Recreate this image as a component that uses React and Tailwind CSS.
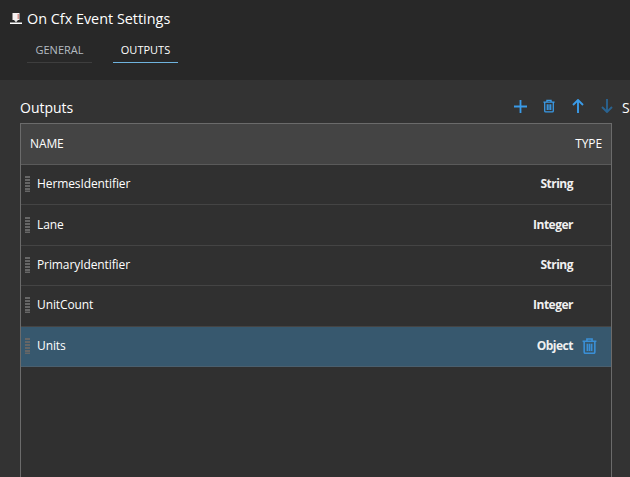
const rows = [
  { name: 'HermesIdentifier', type: 'String' },
  { name: 'Lane', type: 'Integer' },
  { name: 'PrimaryIdentifier', type: 'String' },
  { name: 'UnitCount', type: 'Integer' },
  { name: 'Units', type: 'Object', selected: true },
]

function TrashIcon({ className }) {
  return (
    <svg viewBox="0 0 14 15" fill="none" stroke="currentColor" strokeWidth="1.5" className={className}>
      <path d="M0.5 3h13M4.6 3V1h4.8v2M2 3v10.2c0 .7.5 1.2 1.2 1.2h7.6c.7 0 1.2-.5 1.2-1.2V3M5 5.5v6.8M7 5.5v6.8M9 5.5v6.8" />
    </svg>
  )
}

function Grip() {
  return (
    <svg viewBox="0 0 5 16" className="w-[5px] h-4 shrink-0 text-[#666666]" fill="currentColor">
      <rect y="0" width="5" height="2" />
      <rect y="3" width="5" height="2" />
      <rect y="6" width="5" height="2" />
      <rect y="9" width="5" height="2" />
      <rect y="12" width="5" height="2" />
      <rect y="14.5" width="5" height="1.5" />
    </svg>
  )
}

function Row({ name, type, selected }) {
  return (
    <div className={`flex items-center h-[40.4px] pl-1 pb-px border-b ${selected ? 'bg-[#37586e] border-[#4a5f6e]' : 'border-[#444444]'}`}>
      <Grip />
      <span className="ml-[7px] text-white tracking-[-0.1px]">{name}</span>
      <span className="ml-auto w-[100px] text-right font-bold tracking-[-0.5px] text-[#f0f0f0]">{type}</span>
      <span className="w-[38px] flex justify-center pr-[5px]">
        {selected && <TrashIcon className="w-[15px] h-4 text-[#3a8fd6]" />}
      </span>
    </div>
  )
}

export default function App() {
  return (
    <div className="w-[630px] h-[477px] overflow-hidden bg-[#333333] text-xs text-white font-['Open_Sans',sans-serif]">
      <div className="h-20 bg-[#282828] pt-[9px]">
        <div className="flex items-center pl-[10px] h-[19px]">
          <svg viewBox="0 0 12 11" className="w-3 h-[11px] mr-[5px]">
            <path d="M2.5 0h7v7h-7z" fill="#f6f0f0" />
            <path d="M7.5 1h1.5v5H7.5z" fill="#b8402f" opacity="0.5" />
            <path d="M0 9.5h12V11H0z" fill="#ffffff" />
            <path d="M4 7h4L6 9.5z" fill="#e8e8e8" />
          </svg>
          <span className="text-[14.4px] text-white">On Cfx Event Settings</span>
        </div>
        <div className="flex gap-[21px] ml-[27px] mt-[7px]">
          <div className="w-[65px] h-[28px] border-b border-[#3e3e3e] text-center text-[11px] leading-[29px] text-[#b4bcc2]">GENERAL</div>
          <div className="w-[65px] h-[28px] border-b border-[#6fb3de] text-center text-[11px] leading-[29px] text-white">OUTPUTS</div>
        </div>
      </div>

      <div className="pl-5 pt-[19px]">
        <div className="flex items-center h-[18px] whitespace-nowrap">
          <span className="w-[494px] shrink-0 text-sm">Outputs</span>
          <div className="flex items-center shrink-0 text-[#3a9be8] -mt-1">
            <svg viewBox="0 0 13 13" className="w-[13px] h-[13px] shrink-0 mr-[16px]" fill="none" stroke="currentColor" strokeWidth="1.8">
              <path d="M6.5 0v13M0 6.5h13" />
            </svg>
            <TrashIcon className="w-3 h-[14px] shrink-0 mr-[17px]" />
            <svg viewBox="0 0 12 14" className="w-3 h-[14px] shrink-0 mr-[17px]" fill="none" stroke="currentColor" strokeWidth="1.9">
              <path d="M6 14V1M1 6l5-5 5 5" />
            </svg>
            <svg viewBox="0 0 12 14" className="w-3 h-[14px] shrink-0 mr-[9px] text-[#2a6390]" fill="none" stroke="currentColor" strokeWidth="1.9">
              <path d="M6 0v13M1 8l5 5 5-5" />
            </svg>
          </div>
          <span className="text-sm shrink-0">Settings</span>
        </div>

        <div className="mt-[6px] w-[592px] h-[400px] bg-[#303030] border border-[#6b6b6b]">
          <div className="flex items-center justify-between h-[41px] pl-[9px] pr-[9px] bg-[#444444] border-b border-[#5a5a5a]">
            <span className="tracking-[-0.1px]">NAME</span>
            <span className="tracking-[-0.1px]">TYPE</span>
          </div>
          {rows.map((r) => (
            <Row key={r.name} {...r} />
          ))}
        </div>
      </div>
    </div>
  )
}
